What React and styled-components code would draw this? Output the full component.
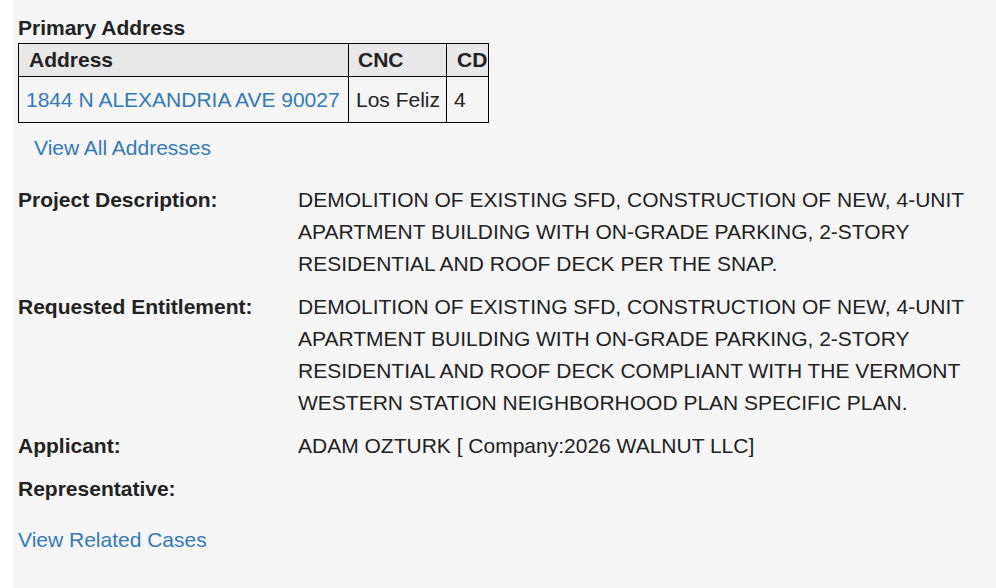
import React from 'react';
import styled, { createGlobalStyle } from 'styled-components';

const Global = createGlobalStyle`
  html, body {
    margin: 0;
    padding: 0;
    background: #fff;
  }
  body {
    font-family: "Liberation Sans", Arial, Helvetica, sans-serif;
    color: #222;
  }
`;

const Page = styled.div`
  margin-left: 13px;
  min-height: 588px;
  background: #f5f5f5;
  padding: 15px 20px 0 5px;
  box-sizing: border-box;
  font-size: 21px;
`;

const Heading = styled.h4`
  margin: 0 0 2px;
  font-size: 21px;
  font-weight: bold;
  line-height: 26px;
`;

const Table = styled.table`
  border-collapse: collapse;
  table-layout: fixed;
  width: 471px;
  border: 1px solid #000;
`;

const Th = styled.th`
  background: #e8e8e8;
  border: 1px solid #000;
  text-align: left;
  font-weight: bold;
  height: 32px;
  padding: 0 0 0 ${p => p.$pad || 9}px;
  line-height: 22px;
  white-space: nowrap;
  overflow: visible;
`;

const Td = styled.td`
  border: 1px solid #000;
  height: 45px;
  padding: 0 7px;
  line-height: 22px;
  white-space: nowrap;
`;

const Link = styled.a`
  color: #337ab7;
  text-decoration: none;
  cursor: pointer;
`;

const AllLink = styled(Link)`
  display: block;
  margin: 12px 0 0 16px;
  line-height: 26px;
`;

const Details = styled.dl`
  display: grid;
  grid-template-columns: 280px 1fr;
  row-gap: 11px;
  margin: 23px 0 0;
  line-height: 32px;
`;

const Label = styled.dt`
  font-weight: bold;
`;

const Value = styled.dd`
  margin: 0;
  min-height: 32px;
`;

const Related = styled(Link)`
  display: block;
  margin-top: 19px;
  line-height: 32px;
`;

const rows = [
  {
    label: 'Project Description:',
    value:
      'DEMOLITION OF EXISTING SFD, CONSTRUCTION OF NEW, 4-UNIT APARTMENT BUILDING WITH ON-GRADE PARKING, 2-STORY RESIDENTIAL AND ROOF DECK PER THE SNAP.',
  },
  {
    label: 'Requested Entitlement:',
    value:
      'DEMOLITION OF EXISTING SFD, CONSTRUCTION OF NEW, 4-UNIT APARTMENT BUILDING WITH ON-GRADE PARKING, 2-STORY RESIDENTIAL AND ROOF DECK COMPLIANT WITH THE VERMONT WESTERN STATION NEIGHBORHOOD PLAN SPECIFIC PLAN.',
  },
  { label: 'Applicant:', value: 'ADAM OZTURK [ Company:2026 WALNUT LLC]' },
  { label: 'Representative:', value: '' },
];

export default function App() {
  return (
    <>
      <Global />
      <Page>
        <Heading>Primary Address</Heading>
        <Table>
          <colgroup>
            <col style={{ width: 330 }} />
            <col style={{ width: 98 }} />
            <col style={{ width: 42 }} />
          </colgroup>
          <thead>
            <tr>
              <Th $pad={10}>Address</Th>
              <Th $pad={9}>CNC</Th>
              <Th $pad={10}>CD</Th>
            </tr>
          </thead>
          <tbody>
            <tr>
              <Td>
                <Link>1844 N ALEXANDRIA AVE 90027</Link>
              </Td>
              <Td>Los Feliz</Td>
              <Td>4</Td>
            </tr>
          </tbody>
        </Table>
        <AllLink>View All Addresses</AllLink>
        <Details>
          {rows.map(r => (
            <React.Fragment key={r.label}>
              <Label>{r.label}</Label>
              <Value>{r.value}</Value>
            </React.Fragment>
          ))}
        </Details>
        <Related>View Related Cases</Related>
      </Page>
    </>
  );
}
